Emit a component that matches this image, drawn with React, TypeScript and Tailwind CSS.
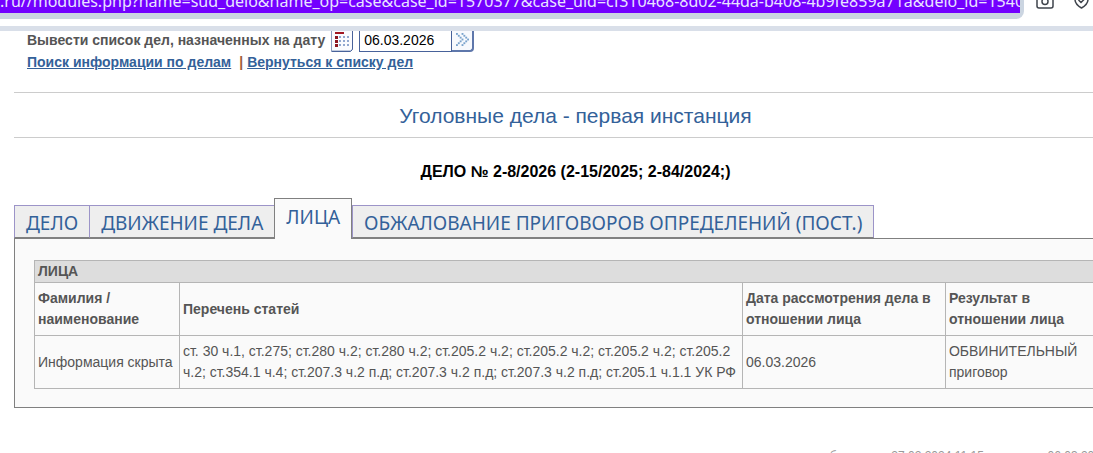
import React from "react";

const ADDRESS =
  ".ru//modules.php?name=sud_delo&name_op=case&case_id=1570377&case_uid=cf310468-8d02-44da-b408-4b9fe859a71a&delo_id=1540006";

const tabs = ["ДЕЛО", "ДВИЖЕНИЕ ДЕЛА", "ЛИЦА", "ОБЖАЛОВАНИЕ ПРИГОВОРОВ ОПРЕДЕЛЕНИЙ (ПОСТ.)"];

function CameraIcon() {
  return (
    <svg width="18" height="22" viewBox="0 0 18 22" fill="none" stroke="#3f444c" strokeWidth="1.5" aria-hidden="true">
      <path d="M1 8.500a2 2 0 0 1 2-2h2l1.500-2.500h5L13 6.500h2a2 2 0 0 1 2 2V19a2 2 0 0 1-2 2H3a2 2 0 0 1-2-2z" />
      <circle cx="9" cy="14.500" r="3" />
    </svg>
  );
}

function ShieldIcon() {
  return (
    <svg width="15" height="22" viewBox="0 0 15 22" fill="none" stroke="#3f444c" strokeWidth="1.5" aria-hidden="true">
      <path d="M7.500 5 1 7.500v5c0 4 3 6.500 6.500 8.500 3.500-2 6.500-4.500 6.500-8.500v-5z" />
      <path d="m4.500 13 2.500 2.500 4-4" />
    </svg>
  );
}

function CalendarIcon() {
  const cols = [4, 8, 12, 16];
  const rows = [8, 12, 16];
  return (
    <svg width="22" height="24" viewBox="0 0 22 24" aria-hidden="true">
      <path d="M.5.5h21v20.500l-2 2H.5z" fill="#fafbfe" stroke="#8b9cc0" />
      <path d="M.5 23.500h19l2-2V1" fill="none" stroke="#48629a" />
      <rect x="4" y="4" width="9" height="2" fill="#a11722" />
      {rows.map((y) =>
        cols.map((x, i) => (
          <rect
            key={`${x}-${y}`}
            x={x}
            y={y}
            width={i === 0 ? 3 : 2}
            height={i === 0 ? 3 : 2}
            fill={i === 0 ? "#8d1620" : "#91a7cf"}
          />
        )),
      )}
    </svg>
  );
}

function GoIcon() {
  const dots = [
    [0, 0], [2, 2], [4, 4], [6, 6], [4, 8], [2, 10], [0, 12],
    [6, 0], [8, 2], [10, 4], [12, 6], [10, 8], [8, 10], [6, 12],
  ];
  return (
    <svg width="13" height="13" viewBox="0 0 14 14" fill="#79a2cc" aria-hidden="true">
      {dots.map(([x, y]) => (
        <rect key={`${x}-${y}`} x={x} y={y} width="2" height="2" />
      ))}
    </svg>
  );
}

function BrowserBar() {
  return (
    <header className="shrink-0 bg-white">
      <div className="flex h-5 items-start overflow-hidden">
        <div className="mr-3 min-w-0 flex-1 rounded-br-lg bg-[#cbd5e1] pr-1 pb-1.5">
          <div className="flex h-[13px] items-end overflow-hidden bg-[#7300ff]">
            <input
              aria-label="Адрес страницы"
              readOnly
              value={ADDRESS}
              className="h-6 w-full shrink-0 bg-transparent font-['Noto_Sans',sans-serif] text-base leading-6 text-[#e9e4ff] outline-none"
            />
          </div>
        </div>
        <div className="flex h-[9px] items-end gap-5 pr-1">
          <button aria-label="Снимок экрана"><CameraIcon /></button>
          <button aria-label="Защита"><ShieldIcon /></button>
        </div>
      </div>
      <div className="mt-1.5 h-[5px] bg-[#d9dfe9]" />
    </header>
  );
}

const th = "border border-[#b5b5b5] px-[3px] py-[5px] text-left font-bold";
const td = "border border-[#b5b5b5] px-[3px] py-[5px]";

export default function App() {
  return (
    <div className="flex h-screen flex-col overflow-hidden bg-white font-['Liberation_Sans',Arial,sans-serif] text-sm text-[#555]">
      <BrowserBar />
      <main className="-mr-11 pl-[14px]">
        <div className="flex h-[21px] items-end overflow-hidden pl-[13px]">
          <label htmlFor="date" className="leading-6 font-bold">Вывести список дел, назначенных на дату</label>
          <button aria-label="Календарь" className="mr-1.5 ml-1.5"><CalendarIcon /></button>
          <input
            id="date"
            defaultValue="06.03.2026"
            className="h-6 w-[93px] border border-[#48629a] px-1 text-sm text-black outline-none"
          />
          <button aria-label="Показать" className="flex h-6 w-[22px] items-center justify-center rounded-br border-r-2 border-b-2 border-[#5e77ab] bg-[#f7f9fd]">
            <GoIcon />
          </button>
        </div>
        <nav className="pl-[13px] leading-5 font-bold text-[#336199]">
          <a href="#search" className="underline">Поиск информации по делам</a>
          <span className="mr-1 ml-2 text-[#a0603c]">|</span>
          <a href="#list" className="underline">Вернуться к списку дел</a>
        </nav>

        <h1 className="mt-5 border-y border-[#ccc] pt-[9px] pb-[7px] text-center text-[21px] leading-7 text-[#336199]">
          Уголовные дела - первая инстанция
        </h1>
        <h2 className="mt-6 text-center text-base leading-5 font-bold text-black">
          ДЕЛО № 2-8/2026 (2-15/2025; 2-84/2024;)
        </h2>

        <div role="tablist" className="mt-4 flex items-end font-['Noto_Sans',sans-serif] text-[19px] leading-7 text-[#336199]">
          {tabs.map((tab) => {
            const active = tab === "ЛИЦА";
            return (
              <button
                key={tab}
                role="tab"
                aria-selected={active}
                className={
                  active
                    ? "relative z-10 -mb-px h-[41px] border border-b-0 border-[#808080] bg-[#fafafa] px-[11px] pb-1 whitespace-nowrap"
                    : "h-[33px] border border-r-0 border-[#9c94c8] border-b-[#808080] bg-[#eee] px-[11px] pt-[3px] whitespace-nowrap last:border-r"
                }
              >
                {tab}
              </button>
            );
          })}
        </div>
        <section className="border border-[#808080] bg-[#fafafa] px-[19px] pt-[21px] pb-[18px]">
          <table className="w-full table-fixed border-collapse leading-[21px]">
            <colgroup>
              <col className="w-[145px]" />
              <col />
              <col className="w-[203px]" />
              <col className="w-[171px]" />
            </colgroup>
            <thead>
              <tr>
                <th colSpan={4} className="border border-[#b5b5b5] bg-[#ddd] px-[3px] text-left font-bold">ЛИЦА</th>
              </tr>
              <tr>
                <th className={th}>Фамилия / наименование</th>
                <th className={th}>Перечень статей</th>
                <th className={th}>Дата рассмотрения дела в отношении лица</th>
                <th className={th}>Результат в<br />отношении лица</th>
              </tr>
            </thead>
            <tbody>
              <tr>
                <td className={td}>Информация скрыта</td>
                <td className={td}>
                  ст. 30 ч.1, ст.275; ст.280 ч.2; ст.280 ч.2; ст.205.2 ч.2; ст.205.2 ч.2; ст.205.2 ч.2; ст.205.2 ч.2; ст.354.1 ч.4; ст.207.3 ч.2 п.д; ст.207.3 ч.2 п.д; ст.207.3 ч.2 п.д; ст.205.1 ч.1.1 УК РФ
                </td>
                <td className={td}>06.03.2026</td>
                <td className={td}>ОБВИНИТЕЛЬНЫЙ приговор</td>
              </tr>
            </tbody>
          </table>
        </section>
        <footer className="mt-10 -mr-1 text-right text-xs leading-4 whitespace-nowrap text-[#999]">
          опубликовано 27.02.2024 11:15, изменено 06.03.2026 15:40
        </footer>
      </main>
    </div>
  );
}
